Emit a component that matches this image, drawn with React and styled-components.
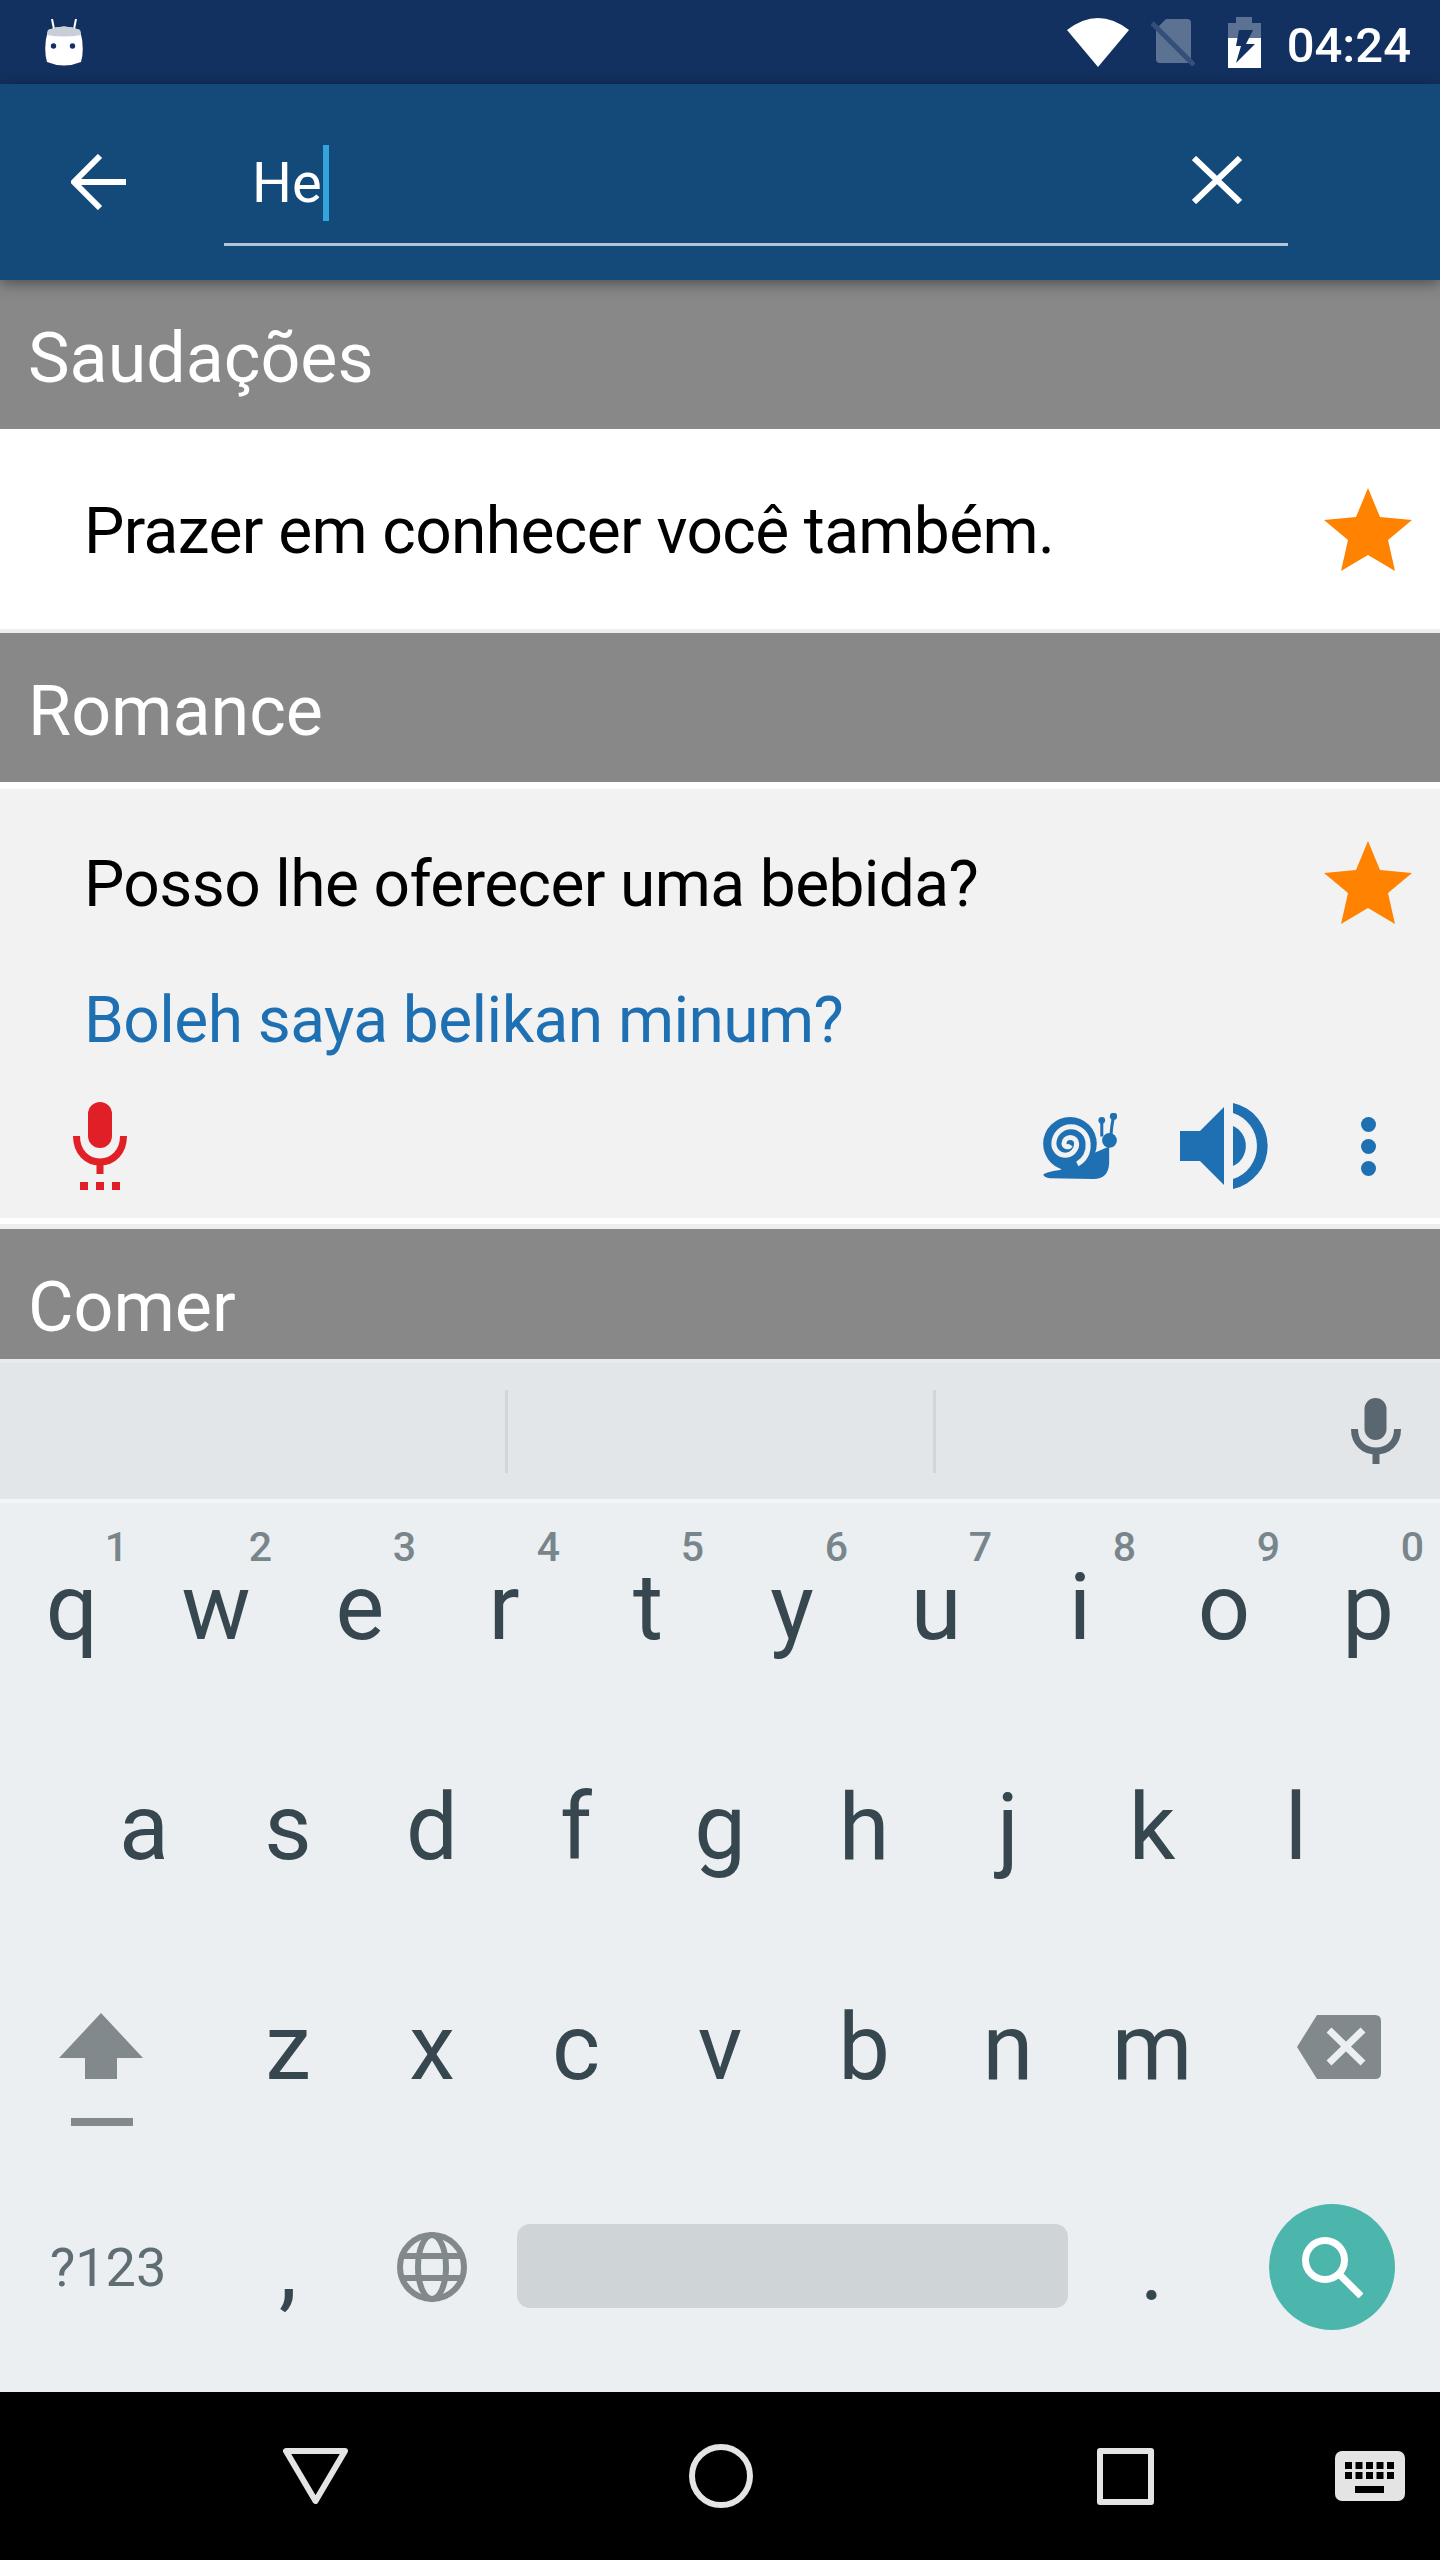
import React from 'react'
import styled, { createGlobalStyle } from 'styled-components'

const GlobalStyle = createGlobalStyle`
  html, body {
    margin: 0;
    padding: 0;
    background: #fff;
  }
  * {
    box-sizing: border-box;
  }
`

const BLUE = '#1e70b3'
const STATUS = '#133160'
const KEY_ICON = '#82898d'

const rows = [
  [['q', '1'], ['w', '2'], ['e', '3'], ['r', '4'], ['t', '5'], ['y', '6'], ['u', '7'], ['i', '8'], ['o', '9'], ['p', '0']],
  [['a'], ['s'], ['d'], ['f'], ['g'], ['h'], ['j'], ['k'], ['l']],
]

const App = () => {
  return (
    <Screen>
      <GlobalStyle />
      <StatusBar>
        <svg width="40" height="47" viewBox="0 0 40 47">
          <path d="M8 0l2 10M32 0l-2 10" stroke="#fff" strokeWidth="2" />
          <path d="M4 11Q20 4 36 11Q41 29 37 43Q20 50 3 43Q-1 29 4 11Z" fill="#fff" />
          <path d="M3 16L4 11Q20 4 36 11L37 16Q20 19 3 16Z" fill="#c8cfd9" />
          <circle cx="9.5" cy="27" r="2.7" fill={STATUS} />
          <circle cx="28.5" cy="27" r="2.7" fill={STATUS} />
        </svg>
        <StatusGroup>
          <StatusIcon width="62" height="49" viewBox="0 0 62 49">
            <path d="M0 12Q31 -12 62 12L31 49Z" fill="#fff" />
          </StatusIcon>
          <StatusIcon $left={22} width="44" height="47" viewBox="0 0 44 47">
            <path d="M15 0H36Q40 0 40 4V40Q40 44 36 44H9Q5 44 5 40V10Z" fill="#5b7293" />
            <path d="M1 4L43 46" stroke="#34507a" strokeWidth="5" />
          </StatusIcon>
          <StatusIcon $left={33} width="33" height="51" viewBox="0 0 33 51">
            <path d="M8 0H24V6H33V21H0V6H8Z" fill="#5b7293" />
            <rect y="21" width="33" height="30" fill="#fff" />
            <path d="M11 13H25L18 27H27L8 46L13 29H8Z" fill={STATUS} />
          </StatusIcon>
          <Time>04:24</Time>
        </StatusGroup>
      </StatusBar>

      <Toolbar>
        <svg width="55" height="56" viewBox="0 0 55 56" fill="none" stroke="#fff" strokeWidth="6">
          <path d="M55 28H3" />
          <path d="M29 2L3 28L29 54" />
        </svg>
        <SearchField>
          <Query>He</Query>
          <Caret />
          <ClearIcon width="50" height="48" viewBox="0 0 50 48" fill="none" stroke="#fff" strokeWidth="6">
            <path d="M2 2L48 46M48 2L2 46" />
          </ClearIcon>
        </SearchField>
      </Toolbar>

      <List>
        <SectionHeader>Saudações</SectionHeader>
        <Phrase>
          <PhraseBody $bg="#fff">
            <PhraseTop $height={200}>
              <PhraseText>Prazer em conhecer você também.</PhraseText>
              <Star />
            </PhraseTop>
          </PhraseBody>
        </Phrase>

        <SectionHeader>Romance</SectionHeader>
        <Phrase $open>
          <PhraseBody $bg="#f2f2f2">
            <PhraseTop $height={186}>
              <PhraseText>Posso lhe oferecer uma bebida?</PhraseText>
              <Star />
            </PhraseTop>
            <Translation>Boleh saya belikan minum?</Translation>
            <Actions>
              <svg width="54" height="88" viewBox="0 0 54 88" fill="#e01f26">
                <rect x="15" y="0" width="24" height="46" rx="12" />
                <path d="M3.5 34C3.5 50 14 60 27 60S50.5 50 50.5 34" fill="none" stroke="#e01f26" strokeWidth="7" />
                <rect x="23.5" y="58" width="7" height="14" />
                <rect x="7" y="80" width="8" height="8" />
                <rect x="23" y="80" width="8" height="8" />
                <rect x="39" y="80" width="8" height="8" />
              </svg>
              <SnailIcon width="74" height="67" viewBox="0 0 220 200">
                <circle cx="80" cy="92" r="80" fill={BLUE} />
                <path d="M0 184Q6 176 50 170L150 120L197 100V150Q195 197 150 197L20 195Q4 192 0 184Z" fill={BLUE} />
                <circle cx="198" cy="82" r="22" fill={BLUE} />
                <path d="M175 22V70M210 10Q204 40 202 70" stroke={BLUE} strokeWidth="9" fill="none" />
                <circle cx="175" cy="22" r="10" fill={BLUE} />
                <circle cx="210" cy="10" r="11" fill={BLUE} />
                <path
                  d="M102 152A60 60 0 0 0 134 92A51 51 0 0 0 32 92A34 34 0 0 0 100 92A19 19 0 0 0 62 92A11 11 0 0 0 82 96"
                  fill="none"
                  stroke="#f2f2f2"
                  strokeWidth="15"
                />
              </SnailIcon>
              <SpeakerIcon width="88" height="86" viewBox="0 0 88 86" fill={BLUE}>
                <path d="M0 28H20L44 4V82L20 58H0Z" />
                <path d="M53 23A22 22 0 0 1 53 63Z" />
                <path d="M53 0A44 44 0 0 1 53 86V76A34.7 34.7 0 0 0 53 10Z" />
              </SpeakerIcon>
              <MoreIcon width="15" height="59" viewBox="0 0 15 59" fill={BLUE}>
                <circle cx="7.5" cy="7.5" r="7.5" />
                <circle cx="7.5" cy="29.5" r="7.5" />
                <circle cx="7.5" cy="51.5" r="7.5" />
              </MoreIcon>
            </Actions>
          </PhraseBody>
        </Phrase>

        <SectionHeader>Comer</SectionHeader>
      </List>

      <Suggestions>
        <SuggestionCell $width={505} />
        <SuggestionCell $width={428} $divider />
        <SuggestionCell $divider>
          <svg width="50" height="66" viewBox="0 0 50 66" fill="#5b6770">
            <rect x="13.5" y="0" width="22" height="42" rx="11" />
            <path d="M3.5 31C3.5 45 13 53 25 53S46.5 45 46.5 31" fill="none" stroke="#5b6770" strokeWidth="7" />
            <rect x="21.5" y="50" width="7" height="16" />
          </svg>
        </SuggestionCell>
      </Suggestions>

      <Keyboard>
        {rows.map((row, i) => (
          <KeyRow key={i}>
            {row.map(([letter, digit]) => (
              <Key key={letter}>
                {letter}
                {digit && <Hint>{digit}</Hint>}
              </Key>
            ))}
          </KeyRow>
        ))}
        <KeyRow>
          <Key $width={216}>
            <ShiftIcon width="84" height="113" viewBox="0 0 84 113" fill={KEY_ICON}>
              <path d="M42 0L84 45H58V66H26V45H0Z" />
              <rect x="12" y="105" width="62" height="8" />
            </ShiftIcon>
          </Key>
          {['z', 'x', 'c', 'v', 'b', 'n', 'm'].map(letter => (
            <Key key={letter}>{letter}</Key>
          ))}
          <Key $width={216}>
            <BackspaceIcon width="84" height="64" viewBox="0 0 84 64">
              <path d="M20 0H78Q84 0 84 6V58Q84 64 78 64H20L0 32Z" fill={KEY_ICON} />
              <path d="M32 15L66 48M66 15L32 48" stroke="#eceff1" strokeWidth="7" />
            </BackspaceIcon>
          </Key>
        </KeyRow>
        <KeyRow>
          <ModeKey>?123</ModeKey>
          <Key>,</Key>
          <Key>
            <svg width="70" height="70" viewBox="0 0 70 70" fill="none" stroke={KEY_ICON} strokeWidth="6">
              <circle cx="35" cy="35" r="32" />
              <ellipse cx="35" cy="35" rx="14" ry="32" />
              <path d="M5 24H65M5 46H65" />
            </svg>
          </Key>
          <Key $width={576}>
            <Spacebar />
          </Key>
          <Key>.</Key>
          <Key $width={216}>
            <SearchButton>
              <svg width="61" height="61" viewBox="0 0 61 61" fill="none" stroke="#fff" strokeWidth="7">
                <circle cx="23" cy="23" r="19.5" />
                <path d="M37 37L59 59" />
              </svg>
            </SearchButton>
          </Key>
        </KeyRow>
      </Keyboard>

      <NavBar>
        <NavIcon $left={283} width="65" height="56" viewBox="0 0 65 56" fill="none" stroke="#e4e4e4" strokeWidth="6" strokeLinejoin="round">
          <path d="M3 3H62L32.5 53Z" />
        </NavIcon>
        <NavIcon $left={341} width="64" height="64" viewBox="0 0 64 64" fill="none" stroke="#e4e4e4" strokeWidth="6">
          <circle cx="32" cy="32" r="29" />
        </NavIcon>
        <NavIcon $left={344} width="57" height="57" viewBox="0 0 57 57" fill="none" stroke="#e4e4e4" strokeWidth="6" strokeLinejoin="round">
          <rect x="3" y="3" width="51" height="51" />
        </NavIcon>
        <NavIcon $left={181} width="70" height="50" viewBox="0 0 70 50">
          <rect width="70" height="50" rx="7" fill="#e4e4e4" />
          {[0, 1, 2, 3, 4].map(i => (
            <g key={i}>
              <rect x={10 + i * 10.5} y="11" width="7" height="7" fill="#000" />
              <rect x={10 + i * 10.5} y="21" width="7" height="7" fill="#000" />
            </g>
          ))}
          <rect x="20" y="35" width="29" height="7" fill="#000" />
        </NavIcon>
      </NavBar>
    </Screen>
  )
}

const Star = () => (
  <StarIcon width="88" height="83" viewBox="0 0 88 83">
    <path d="M44 0L56 29L88 32L64 52L71 83L44 67L17 83L24 52L0 32L32 29Z" fill="#ff8300" />
  </StarIcon>
)

const Screen = styled.div`
  width: 1440px;
  height: 2560px;
  display: flex;
  flex-direction: column;
  overflow: hidden;
  font-family: Roboto, "Liberation Sans", sans-serif;
  background: #fff;
`

const StatusBar = styled.div`
  height: 84px;
  flex: none;
  display: flex;
  align-items: center;
  justify-content: space-between;
  padding: 0 29px 0 44px;
  background: ${STATUS};
`

const StatusGroup = styled.div`
  display: flex;
  align-items: center;
`

const StatusIcon = styled.svg`
  margin-left: ${p => p.$left || 0}px;
`

const Time = styled.span`
  margin-left: 26px;
  padding-top: 6px;
  font-size: 49px;
  font-weight: 500;
  color: #fff;
`

const Toolbar = styled.div`
  height: 196px;
  flex: none;
  position: relative;
  z-index: 2;
  display: flex;
  align-items: center;
  gap: 98px;
  padding: 0 152px 0 71px;
  background: #144a7a;
  box-shadow: 0 3px 14px rgba(0, 0, 0, 0.45);
`

const SearchField = styled.div`
  flex: 1;
  height: 128px;
  display: flex;
  align-items: center;
  padding: 5px 46px 0 28px;
  border-bottom: 3px solid #b5c6d6;
`

const Query = styled.span`
  font-size: 56px;
  line-height: 76px;
  color: #fff;
`

const Caret = styled.span`
  width: 6px;
  height: 76px;
  margin-left: 1px;
  background: #33a5dc;
`

const ClearIcon = styled.svg`
  margin: -6px 0 0 auto;
`

const List = styled.div`
  flex: 1;
  min-height: 0;
  overflow: hidden;
`

const SectionHeader = styled.div`
  height: 149px;
  display: flex;
  align-items: center;
  padding: 7px 0 0 28px;
  background: #888;
  color: #fff;
  font-size: 70px;
`

const Phrase = styled.div`
  padding: ${p => (p.$open ? '7px 0 6px' : '0')};
  background: #fff;
  border-bottom: ${p => (p.$open ? '5px' : '4px')} solid #eee;
`

const PhraseBody = styled.div`
  background: ${p => p.$bg};
`

const PhraseTop = styled.div`
  height: ${p => p.$height}px;
  display: flex;
  align-items: center;
  justify-content: space-between;
  padding: 0 28px 0 84px;
`

const PhraseText = styled.div`
  margin-top: 4px;
  font-size: 64px;
  letter-spacing: -0.6px;
  color: #000;
`

const StarIcon = styled.svg`
  flex: none;
`

const Translation = styled.div`
  padding: 1px 0 0 84px;
  font-size: 64px;
  letter-spacing: -0.55px;
  line-height: 90px;
  color: ${BLUE};
`

const Actions = styled.div`
  height: 152px;
  display: flex;
  align-items: center;
  padding: 8px 64px 0 73px;
`

const SnailIcon = styled.svg`
  margin-left: auto;
`

const SpeakerIcon = styled.svg`
  margin-left: 63px;
`

const MoreIcon = styled.svg`
  margin-left: 93px;
`

const Suggestions = styled.div`
  height: 140px;
  flex: none;
  display: flex;
  align-items: center;
  background: #e2e6e9;
  border-top: 4px solid #e8ecef;
`

const SuggestionCell = styled.div`
  ${p => (p.$width ? `width: ${p.$width}px;` : 'flex: 1;')}
  height: 83px;
  display: flex;
  align-items: center;
  justify-content: flex-end;
  padding-right: 39px;
  border-left: ${p => (p.$divider ? '3px solid #d2d6d9' : '0')};
`

const Keyboard = styled.div`
  height: 893px;
  flex: none;
  display: flex;
  flex-direction: column;
  gap: 12px;
  background: #eceff1;
  border-top: 4px solid #f2f5f7;
`

const KeyRow = styled.div`
  height: 208px;
  flex: none;
  display: flex;
  justify-content: center;
`

const Key = styled.div`
  position: relative;
  width: ${p => p.$width || 144}px;
  display: flex;
  align-items: center;
  justify-content: center;
  font-size: 92px;
  color: #37474f;
`

const Hint = styled.span`
  position: absolute;
  top: 24px;
  right: 16px;
  font-size: 41px;
  line-height: 41px;
  font-weight: 500;
  color: #78868c;
`

const ModeKey = styled(Key).attrs({ $width: 216 })`
  font-size: 54px;
  color: #5f6d74;
`

const ShiftIcon = styled.svg`
  margin: 45px 14px 0 0;
`

const BackspaceIcon = styled.svg`
  margin-left: 14px;
`

const Spacebar = styled.div`
  width: 551px;
  height: 84px;
  margin: 0 0 3px 1px;
  border-radius: 13px;
  background: #cfd4d7;
`

const SearchButton = styled.div`
  width: 126px;
  height: 126px;
  display: flex;
  align-items: center;
  justify-content: center;
  border-radius: 50%;
  background: #4db6ac;
`

const NavBar = styled.div`
  height: 168px;
  flex: none;
  display: flex;
  align-items: center;
  background: #000;
`

const NavIcon = styled.svg`
  flex: none;
  margin-left: ${p => p.$left}px;
`

export default App
